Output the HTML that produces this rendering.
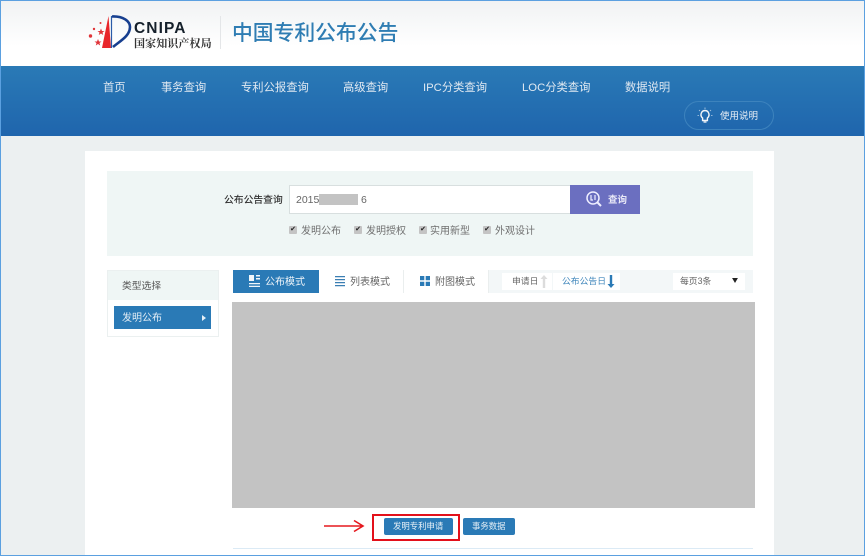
<!DOCTYPE html>
<html lang="zh"><head><meta charset="utf-8"><title>中国专利公布公告</title>
<style>
html,body{margin:0;padding:0}
body{width:865px;height:556px;overflow:hidden;position:relative;background:#ecf0f1;font-family:"Liberation Sans","Noto Sans CJK SC",sans-serif}
div,span,svg{position:absolute;white-space:nowrap;box-sizing:border-box}
.t{line-height:1}
.nav{top:81px;color:#dfe8f1;font-size:11.3px;line-height:14px}
.cb{top:226px;width:8px;height:8px;background:#c4c4c4;border-radius:1px;color:#222;font-size:7px;line-height:8px;text-align:center}
.cl{top:225px;font-size:10px;line-height:14px;color:#6f6f6f}
</style></head><body>
<div style="left:0;top:0;width:865px;height:66px;background:linear-gradient(#f0f2f3,#fff 70%)"></div>
<svg style="left:85px;top:14px" width="50" height="36" viewBox="0 0 50 36">
<path d="M17 34L23.500 2L26 34Z" fill="#e8262b"/>
<path d="M26.500 2V34" stroke="#2a5ba8" stroke-width="1.200" fill="none"/>
<path d="M27 2.500C38 2 45 7 45 13C45 22 35 27 28 33" stroke="#173f8f" stroke-width="2.600" fill="none"/>
<g fill="#e0353a"><path id="s" d="M16 14.500L17 17H19.500L17.500 18.500L18.200 21L16 19.500L13.800 21L14.500 18.500L12.500 17H15Z"/><path d="M13 25L14 27.500H16.500L14.500 29L15.200 31.500L13 30L10.800 31.500L11.500 29L9.500 27.500H12Z"/><circle cx="5.500" cy="22" r="1.700"/><circle cx="9" cy="15" r="1.200"/><circle cx="15.500" cy="9" r="1"/></g>
</svg>
<div class="t" style="left:134px;top:21px;font-size:15.500px;font-weight:700;color:#15202b;letter-spacing:1.100px">CNIPA</div>
<div class="t" style="left:134px;top:39px;font-size:11px;font-family:'Liberation Serif','Noto Serif CJK SC',serif;font-weight:700;color:#333;letter-spacing:.1px">国家知识产权局</div>
<div style="left:220px;top:16px;width:1px;height:33px;background:#e4e6e8"></div>
<div class="t" style="left:232px;top:24px;font-size:20.800px;color:#2f7db3;font-weight:500">中国专利公布公告</div>

<div style="left:0;top:66px;width:865px;height:70px;background:linear-gradient(#2a7ab6,#1f65ad)"></div>
<div class="nav" style="left:103px">首页</div>
<div class="nav" style="left:161px">事务查询</div>
<div class="nav" style="left:241px">专利公报查询</div>
<div class="nav" style="left:343px">高级查询</div>
<div class="nav" style="left:423px">IPC分类查询</div>
<div class="nav" style="left:522px">LOC分类查询</div>
<div class="nav" style="left:625px">数据说明</div>
<div style="left:684px;top:101px;width:90px;height:29px;border:1px solid #3d83bd;border-radius:15px"></div>
<svg style="left:696px;top:107px" width="18" height="18" viewBox="0 0 18 18"><path d="M9 3.500A4.200 4.200 0 0 0 6.600 11V13.500H11.400V11A4.200 4.200 0 0 0 9 3.500Z" fill="none" stroke="#f2f5f8" stroke-width="1.400"/><path d="M7.500 15H10.500" stroke="#f2f5f8" stroke-width="1.300"/><path d="M9 0.500V2M3 3L4 4M15 3L14 4M1.500 8.500H3M15 8.500H16.500" stroke="#b9d0e5" stroke-width=".8"/></svg>
<div class="t" style="left:720px;top:112px;font-size:9.500px;color:#e8eef5">使用说明</div>

<div style="left:85px;top:151px;width:689px;height:405px;background:#fff"></div>
<div style="left:107px;top:171px;width:646px;height:85px;background:#eff6f5"></div>
<div class="t" style="left:224px;top:196px;font-size:9.800px;color:#333;font-weight:500">公布公告查询</div>
<div style="left:289px;top:185px;width:282px;height:29px;background:#fff;border:1px solid #d8dfdf"></div>
<div class="t" style="left:296px;top:195px;font-size:10.500px;color:#666">2015</div>
<div style="left:319px;top:194px;width:39px;height:11px;background:#c3c3c3"></div>
<div class="t" style="left:361px;top:195px;font-size:10.500px;color:#666">6</div>
<div style="left:570px;top:185px;width:70px;height:29px;background:#6b6fc0"></div>
<svg style="left:585px;top:190px" width="18" height="18" viewBox="0 0 18 18"><circle cx="8" cy="8" r="6" fill="none" stroke="#eef" stroke-width="1.500"/><path d="M6 5V10H8M10 5V10" fill="none" stroke="#eef" stroke-width="1.200"/><path d="M12.500 12.500L16 16" stroke="#eef" stroke-width="2"/></svg>
<div class="t" style="left:608px;top:196px;font-size:9.500px;color:#e9e9f7;font-weight:700">查询</div>

<div class="cb" style="left:289px">✔</div><div class="cl" style="left:301px">发明公布</div>
<div class="cb" style="left:354px">✔</div><div class="cl" style="left:366px">发明授权</div>
<div class="cb" style="left:419px">✔</div><div class="cl" style="left:430px">实用新型</div>
<div class="cb" style="left:483px">✔</div><div class="cl" style="left:495px">外观设计</div>

<div style="left:107px;top:270px;width:112px;height:67px;background:#fff;border:1px solid #ebf0f0"></div>
<div style="left:108px;top:271px;width:110px;height:29px;background:#eff6f5"></div>
<div class="t" style="left:122px;top:282px;font-size:9.800px;color:#555">类型选择</div>
<div style="left:114px;top:306px;width:97px;height:23px;background:#2a7ab6"></div>
<div class="t" style="left:122px;top:314px;font-size:10px;color:#e4eef6">发明公布</div>
<svg style="left:202px;top:315px" width="4" height="6" viewBox="0 0 4 6"><path d="M0 0L4 3L0 6Z" fill="#e4eef6"/></svg>

<div style="left:233px;top:270px;width:520px;height:23px;background:#f3f7f8"></div>
<div style="left:233px;top:270px;width:86px;height:23px;background:#2a7ab6"></div>
<svg style="left:249px;top:275px" width="12" height="12" viewBox="0 0 12 12"><path d="M0 0H5V6H0ZM7 0H11V1.500H7ZM7 3H11V4.500H7ZM0 8H11V9.300H0ZM0 10.700H11V12H0Z" fill="#f0f6fa"/></svg>
<div class="t" style="left:265px;top:278px;font-size:10px;color:#eef4f9">公布模式</div>
<div style="left:319px;top:270px;width:85px;height:23px;background:#fff;border-right:1px solid #eaeeee"></div>
<svg style="left:335px;top:276px" width="10" height="11" viewBox="0 0 10 11"><path d="M0 0H10V1.300H0ZM0 3H10V4.300H0ZM0 6H10V7.300H0ZM0 9H10V10.300H0Z" fill="#3b7fb3"/></svg>
<div class="t" style="left:350px;top:278px;font-size:10px;color:#666">列表模式</div>
<div style="left:404px;top:270px;width:85px;height:23px;background:#fff;border-right:1px solid #eaeeee"></div>
<svg style="left:420px;top:276px" width="10" height="10" viewBox="0 0 10 10"><path d="M0 0H4.300V4.300H0ZM5.700 0H10V4.300H5.700ZM0 5.700H4.300V10H0ZM5.700 5.700H10V10H5.700Z" fill="#2a7ab6"/></svg>
<div class="t" style="left:435px;top:278px;font-size:10px;color:#666">附图模式</div>

<div style="left:502px;top:273px;width:50px;height:17px;background:#fff"></div>
<div class="t" style="left:512px;top:277px;font-size:8.800px;color:#666">申请日</div>
<svg style="left:540px;top:275px" width="8" height="13" viewBox="0 0 8 13"><path d="M4 0L7.500 4H5.200V13H2.800V4H.5Z" fill="#dcdcdc"/></svg>
<div style="left:553px;top:273px;width:67px;height:17px;background:#fff"></div>
<div class="t" style="left:562px;top:277px;font-size:8.800px;color:#3f86bb">公布公告日</div>
<svg style="left:607px;top:275px" width="8" height="13" viewBox="0 0 8 13"><path d="M4 13L7.500 9H5.200V0H2.800V9H.5Z" fill="#2a7ab6"/></svg>
<div style="left:673px;top:273px;width:72px;height:17px;background:#fff"></div>
<div class="t" style="left:680px;top:277px;font-size:8.800px;color:#666">每页3条</div>
<svg style="left:732px;top:278px" width="6" height="5" viewBox="0 0 7 6"><path d="M0 0H7L3.500 6Z" fill="#222"/></svg>

<div style="left:232px;top:302px;width:523px;height:206px;background:#c3c3c3"></div>

<svg style="left:322px;top:518px" width="44" height="16" viewBox="0 0 44 16"><path d="M2 8H41M32 2.500L41 8L32 13.500" fill="none" stroke="#e5181e" stroke-width="1.600"/></svg>
<div style="left:372px;top:514px;width:88px;height:27px;border:2px solid #e3101a"></div>
<div style="left:384px;top:518px;width:69px;height:17px;background:#2a7ab6;border-radius:2px"></div>
<div class="t" style="left:393px;top:522px;font-size:8.400px;color:#e6f0f7">发明专利申请</div>
<div style="left:463px;top:518px;width:52px;height:17px;background:#2a7ab6;border-radius:2px"></div>
<div class="t" style="left:472px;top:522px;font-size:8.400px;color:#e6f0f7">事务数据</div>
<div style="left:233px;top:548px;width:520px;height:1px;background:#dbeaf5"></div>

<div style="left:0;top:0;width:865px;height:1px;background:#5ba0e0"></div>
<div style="left:0;top:0;width:1px;height:556px;background:#5ba0e0"></div>
<div style="left:864px;top:0;width:1px;height:556px;background:#5ba0e0"></div>
<div style="left:0;top:555px;width:865px;height:1px;background:#5ba0e0"></div>
</body></html>
